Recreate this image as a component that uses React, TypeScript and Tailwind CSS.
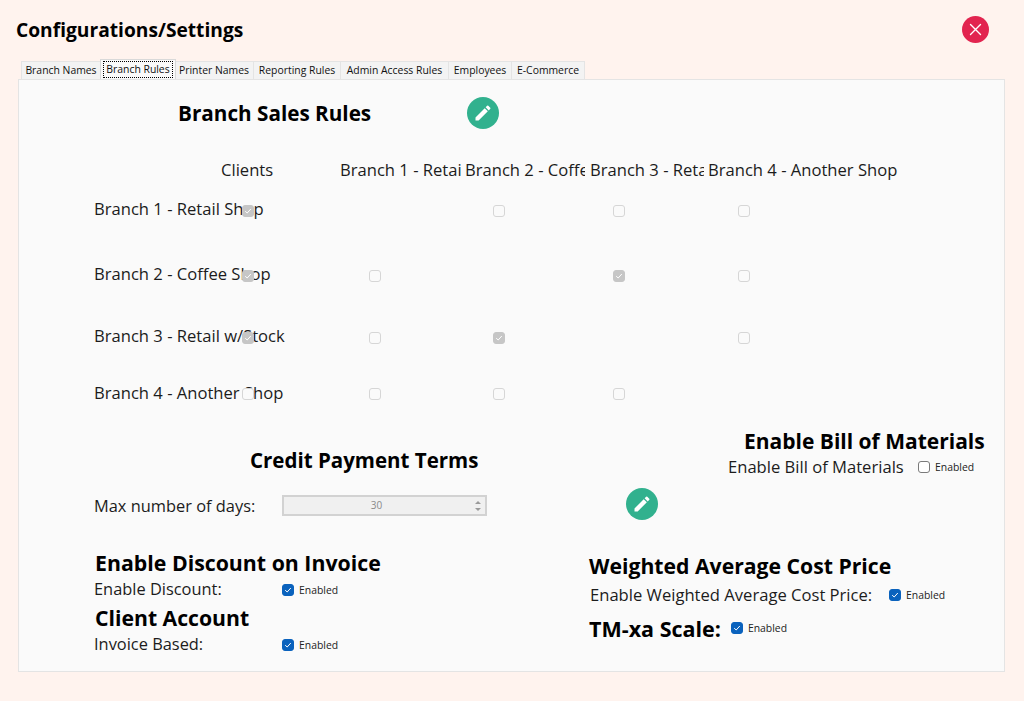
import { MdEdit } from 'react-icons/md';

const tabs = [
  { label: 'Branch Names', width: 'w-[80px]', active: false },
  { label: 'Branch Rules', width: 'w-[76px]', active: true },
  { label: 'Printer Names', width: 'w-[79px]', active: false },
  { label: 'Reporting Rules', width: 'w-[87px]', active: false },
  { label: 'Admin Access Rules', width: 'w-[108px]', active: false },
  { label: 'Employees', width: 'w-[63px]', active: false },
  { label: 'E-Commerce', width: 'w-[73px]', active: false },
];

const headers = [
  { label: 'Branch 1 - Retail Shop', cell: 'w-[121px] mr-[4px]' },
  { label: 'Branch 2 - Coffee Shop', cell: 'w-[120px] mr-[5px]' },
  { label: 'Branch 3 - Retail w/Stock', cell: 'w-[114px] mr-[4px]' },
  { label: 'Branch 4 - Another Shop', cell: 'w-[200px]' },
];

const columns = ['w-[125px] pl-[29px]', 'w-[125px] pl-[28px]', 'w-[118px] pl-[23px]', 'w-[100px] pl-[30px]'];

const rows = [
  { label: 'Branch 1 - Retail Shop', client: true, checks: [null, false, false, false], space: '', text: '-translate-y-px', box: 'translate-y-px' },
  { label: 'Branch 2 - Coffee Shop', client: true, checks: [false, null, true, false], space: 'mt-[25px]', text: '-translate-y-px', box: 'translate-y-px' },
  { label: 'Branch 3 - Retail w/Stock', client: true, checks: [false, true, null, false], space: 'mt-[23px]', text: '-translate-y-[2px]', box: '' },
  { label: 'Branch 4 - Another Shop', client: false, checks: [false, false, false, null], space: 'mt-[16px]', text: '-translate-y-px', box: '' },
];

const Check = ({ checked, enabled }: { checked: boolean; enabled?: boolean }) => {
  let look = 'bg-[#fafafa] border-[#d6d6d6]';
  if (checked) look = enabled ? 'bg-[#0a62bd] border-[#0a62bd]' : 'bg-[#c6c6c6] border-[#c6c6c6]';
  else if (enabled) look = 'bg-white border-[#7a7a7a]';

  return (
    <span className={`flex h-3 w-3 shrink-0 items-center justify-center rounded-[3px] border ${look}`}>
      {checked && (
        <svg width="8" height="8" viewBox="0 0 8 8" fill="none" stroke="#fff" strokeWidth="1">
          <path d="M1.2 4.2 3.2 6 6.8 2" />
        </svg>
      )}
    </span>
  );
};

const EnabledBox = ({ checked }: { checked: boolean }) => (
  <span className="flex items-center gap-[5px]">
    <Check checked={checked} enabled />
    <span className="text-[10.4px] leading-3 text-[#222]">Enabled</span>
  </span>
);

const EditButton = () => (
  <button className="flex h-8 w-8 items-center justify-center rounded-full bg-[#31b18e] text-white">
    <MdEdit size={20} />
  </button>
);

export default function App() {
  return (
    <div className="h-[701px] w-[1024px] overflow-hidden bg-[#fff3ee] font-['Open_Sans',sans-serif] text-[#1c1c1c]">
      <header className="flex h-[59px] items-start pl-[16px] pt-[16px]">
        <h1 className="text-[19.2px] font-bold leading-[28px] text-black">Configurations/Settings</h1>
        <button className="ml-[719px] flex h-[27px] w-[27px] items-center justify-center rounded-full bg-[#e2244f]">
          <svg width="15" height="15" viewBox="0 0 15 15" stroke="#fff" strokeWidth="1.4" strokeLinecap="round">
            <path d="M2.5 2.5 12.5 12.5M12.5 2.5 2.5 12.5" />
          </svg>
        </button>
      </header>

      <nav className="flex h-[20px] items-end pl-[21px]">
        {tabs.map((tab) =>
          tab.active ? (
            <div
              key={tab.label}
              className={`${tab.width} z-10 -ml-px -mr-px flex h-[20px] items-center justify-center border border-b-0 border-[#d9d9d9] bg-[#fafafa] text-[10.4px] text-[#111]`}
            >
              <span className="border border-dotted border-black px-[2px] leading-[15px]">{tab.label}</span>
            </div>
          ) : (
            <div
              key={tab.label}
              className={`${tab.width} flex h-[18px] items-center justify-center border border-b-0 border-l-0 border-[#e4e4e4] bg-[#f3f3f3] text-[10.4px] text-[#111] first:border-l`}
            >
              {tab.label}
            </div>
          ),
        )}
      </nav>

      <main className="ml-[18px] h-[593px] w-[987px] border border-[#e4e4e4] bg-[#fafafa]">
        <section className="flex h-[70px] items-start pl-[159px] pt-[17px]">
          <h2 className="w-[289px] text-[20.7px] font-bold leading-[32px] text-black">Branch Sales Rules</h2>
          <EditButton />
        </section>

        <section className="ml-[75px] text-[16.6px]">
          <div className="flex h-10 items-center whitespace-nowrap">
            <div className="w-[246px] pl-[127px]">Clients</div>
            {headers.map((header) => (
              <div key={header.label} className={`${header.cell} overflow-hidden`}>
                {header.label}
              </div>
            ))}
          </div>

          {rows.map((row) => (
            <div key={row.label} className={`relative flex h-10 items-center whitespace-nowrap ${row.space}`}>
              <div className={`w-[148px] overflow-visible ${row.text}`}>{row.label}</div>
              <div className={`z-10 w-[98px] ${row.box}`}>
                <Check checked={row.client} />
              </div>
              {row.checks.map((value, i) => (
                <div key={i} className={`${columns[i]} ${row.box}`}>
                  {value !== null && <Check checked={value} />}
                </div>
              ))}
            </div>
          ))}
        </section>

        <section className="flex">
          <div className="ml-[76px] w-[494px] pt-[32px]">
            <h2 className="ml-[155px] text-[20.5px] font-bold leading-[28px] text-black">Credit Payment Terms</h2>
            <div className="mt-[21px] flex h-[21px] items-center text-[16.4px]">
              <span className="-ml-px w-[188px] translate-y-px">Max number of days:</span>
              <div className="flex h-[21px] w-[205px] items-center border-2 border-[#d2d2d2] bg-[#f0f0f0] text-[10px] text-[#8a8a8a]">
                <span className="flex-1 pr-[6px] text-center">30</span>
                <span className="mr-[4px] flex flex-col gap-[4px]">
                  <svg width="6" height="3" viewBox="0 0 6 3" fill="#9a9a9a"><path d="M3 0 6 3H0Z" /></svg>
                  <svg width="6" height="3" viewBox="0 0 6 3" fill="#9a9a9a"><path d="M0 0H6L3 3Z" /></svg>
                </span>
              </div>
            </div>

            <h2 className="mt-[33px] text-[21.3px] font-bold leading-[28px] text-black">Enable Discount on Invoice</h2>
            <div className="flex h-[24px] items-center text-[16.4px]">
              <span className="-ml-px w-[188px]">Enable Discount:</span>
              <span className="translate-y-px">
                <EnabledBox checked />
              </span>
            </div>
            <h2 className="mt-[3px] text-[21.2px] font-bold leading-[28px] text-black">Client Account</h2>
            <div className="flex h-[24px] items-center text-[16.4px]">
              <span className="-ml-px w-[188px]">Invoice Based:</span>
              <span className="translate-y-px">
                <EnabledBox checked />
              </span>
            </div>
          </div>

          <div className="flex-1 pt-[13px]">
            <div className="ml-[155px]">
              <h2 className="whitespace-nowrap text-[21px] font-bold leading-[28px] text-black">Enable Bill of Materials</h2>
              <div className="flex h-[24px] items-center text-[16.6px]">
                <span className="-ml-[16px] w-[190px] whitespace-nowrap">Enable Bill of Materials</span>
                <EnabledBox checked={false} />
              </div>
            </div>
            <div className="ml-[37px] mt-[9px]">
              <EditButton />
            </div>
            <h2 className="mt-[32px] text-[21.2px] font-bold leading-[28px] text-black">Weighted Average Cost Price</h2>
            <div className="flex h-[30px] items-center text-[16.6px]">
              <span className="ml-[1px] w-[299px] whitespace-nowrap">Enable Weighted Average Cost Price:</span>
              <EnabledBox checked />
            </div>
            <div className="mt-[5px] flex h-[28px] items-center gap-[10px]">
              <h2 className="text-[21.5px] font-bold leading-[28px] text-black">TM-xa Scale:</h2>
              <span className="-translate-y-px">
                <EnabledBox checked />
              </span>
            </div>
          </div>
        </section>
      </main>
    </div>
  );
}
